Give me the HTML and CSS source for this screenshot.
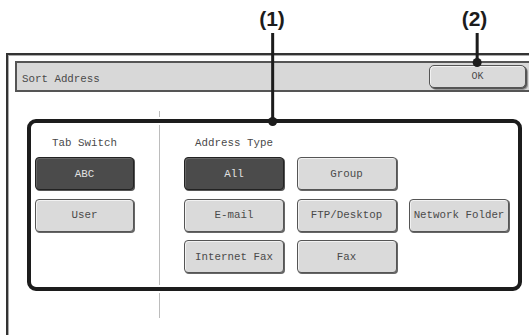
FILE: index.html
```html
<!DOCTYPE html>
<html lang="en">
<head>
    <meta charset="UTF-8">
    <title>Sort Address</title>
    <link rel="stylesheet" href="styles.css">
</head>
<body>
<div class="page">
    <div class="window">
        <div class="titlebar">
            <span class="title">Sort Address</span>
            <span class="btn ok">OK</span>
        </div>
        <div class="panel">
            <div class="col tab-col">
                <div class="col-label">Tab Switch</div>
                <div class="stack">
                    <span class="btn on">ABC</span>
                    <span class="btn">User</span>
                </div>
            </div>
            <div class="divider"></div>
            <div class="col type-col">
                <div class="col-label">Address Type</div>
                <div class="grid">
                    <span class="btn on">All</span>
                    <span class="btn">Group</span>
                    <span class="btn empty"></span>
                    <span class="btn">E-mail</span>
                    <span class="btn">FTP/Desktop</span>
                    <span class="btn">Network Folder</span>
                    <span class="btn">Internet Fax</span>
                    <span class="btn">Fax</span>
                </div>
            </div>
        </div>
    </div>

    <!-- callouts -->
    <div class="mark-box"></div>
    <div class="lead lead-1"><span class="num">(1)</span><span class="stem"></span><span class="dot"></span></div>
    <div class="lead lead-2"><span class="num">(2)</span><span class="stem"></span><span class="dot"></span></div>
</div>
</body>
</html>
```

FILE: styles.css
```css
*{
    margin:0;
    padding:0;
    box-sizing:border-box;
}
html, body{
    overflow:hidden;
}
body{
    background:#fff;
    font-family:"Liberation Mono", monospace;
    font-size:10.8px;
    color:#4a4a4a;
}
.page{
    position:relative;
    width:529px;
    height:335px;
    padding-top:53px;
    overflow:hidden;
}
.window{
    margin-left:6px;
    width:600px;
    height:282px;
    border-top:2px solid #333;
    border-left:2px solid #333;
    box-shadow:inset 1px 1px 0 #aaa;
    padding:6px 0 0 7px;
}
.titlebar{
    width:525px;
    height:31px;
    border:2px solid #555;
    border-right:0;
    background:#d8d8d8;
    display:flex;
    align-items:center;
    justify-content:space-between;
    padding:0 14px 0 5px;
}
.title{
    padding-top:5px;
}
.btn{
    display:flex;
    align-items:center;
    justify-content:center;
    height:33px;
    border:1px solid #555;
    border-radius:4px;
    background:#dadada;
    box-shadow:1px 1px 0 #666, inset 1px 1px 0 #f2f2f2;
    white-space:nowrap;
}
.btn.on{
    background:#4b4b4b;
    border-color:#222;
    color:#e2e2e2;
    box-shadow:1px 1px 0 #555, inset 1px 1px 0 #666;
}
.btn.empty{
    visibility:hidden;
}
.ok{
    width:97px;
    height:23px;
    border-radius:5px;
    font-size:10px;
    box-shadow:1px 1px 0 #555, 2px 2px 0 #999, inset 1px 1px 0 #f2f2f2;
}
.panel{
    display:flex;
    margin-top:19px;
    padding-left:20px;
    height:207px;
}
.col{
    padding-top:25px;
}
.col-label{
    height:14px;
    line-height:14px;
    margin-bottom:7px;
    text-align:center;
}
.tab-col{
    width:99px;
}
.stack{
    display:flex;
    flex-direction:column;
    gap:8.5px;
}
.divider{
    width:1px;
    background:#bcbcbc;
    margin:0 24px 0 25px;
}
.type-col .col-label{
    width:100px;
}
.grid{
    display:grid;
    grid-template-columns:100px 100px 100px;
    column-gap:12.5px;
    row-gap:8.5px;
}

/* callouts */
.mark-box{
    position:absolute;
    left:27px;
    top:119px;
    width:495px;
    height:172px;
    border:4px solid #1c1c1c;
    border-radius:9px;
    box-shadow:0 0 0 2px #fff, inset 0 0 0 2px #fff;
}
.lead{
    position:absolute;
    top:7px;
    display:flex;
    flex-direction:column;
    align-items:center;
    transform:translateX(-50%);
}
.lead-1{ left:273px; }
.lead-2{ left:477px; }
.num{
    font-family:"Liberation Sans", Arial, sans-serif;
    font-weight:bold;
    font-size:21px;
    line-height:24px;
    color:#1c1c1c;
}
.lead-1 .num{ margin-right:2px; }
.lead-2 .num{ margin-right:5px; }
.stem{
    width:3px;
    margin-top:2px;
    background:#1c1c1c;
}
.lead-1 .stem{ height:85px; }
.lead-2 .stem{ height:26px; }
.dot{
    width:9px;
    height:9px;
    margin-top:-1px;
    border-radius:50%;
    background:#1c1c1c;
}
```
